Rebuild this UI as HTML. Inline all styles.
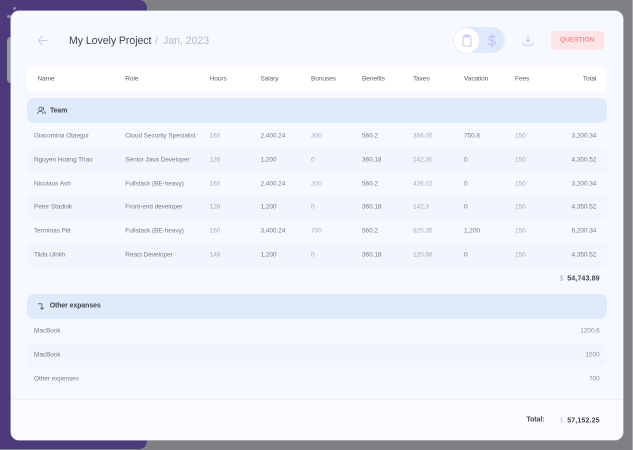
<!DOCTYPE html>
<html><head><meta charset="utf-8">
<style>
html,body{margin:0;padding:0;width:633px;height:450px;overflow:hidden;background:#7f8084;font-family:"Liberation Sans",sans-serif}
.a{position:absolute}
#purple{left:0;top:0;width:147px;height:449px;background:#4d3a7a;border-radius:0 8px 8px 0}
#line{left:632px;top:0;width:1px;height:450px;background:#a8a9ac}
#modal{left:11px;top:10.5px;width:611.5px;height:429px;background:#f6f9ff;border-radius:8px;overflow:hidden;box-shadow:0 0 0 .5px #d8d8e4}
#foot{left:11px;top:399px;width:611.5px;height:40.5px;background:#fbfcff;border-top:1px solid #eef0f6;border-radius:0 0 8px 8px;box-sizing:border-box}
.t{position:absolute;white-space:nowrap;font-size:6.5px;line-height:10px;color:#8b8d94;transform:translateY(-4.3px);letter-spacing:-.07px}
.h{color:#5d5f66}
.d{color:#7b7d84}
.l{color:#a8aab1}
.r{transform:translate(-100%,-4.3px)}
.b{font-weight:bold;color:#43454b;font-size:6.9px;letter-spacing:-.05px}
.n{font-size:7.1px;letter-spacing:.1px}
.bar{position:absolute;left:27px;width:580px;height:25px;background:#dfebfd;border-radius:7px}
.alt{position:absolute;left:27px;width:580px;height:23px;background:#f0f5fe;border-radius:5px}
</style></head><body>
<div class="a" id="purple"></div>
<div class="a" id="line"></div>
<div class="a" style="left:7px;top:37px;width:5px;height:46px;background:#9a9a9c;border-radius:4px 0 0 4px"></div>
<div class="a" style="left:7px;top:15px;width:4px;height:3px;background:#8f8a9c;border-radius:2px"></div>
<div class="a" style="left:13px;top:7px;width:3px;height:3px;background:#8f8a9c;border-radius:2px"></div>
<div class="a" id="modal"></div>
<div class="a" id="foot"></div>

<svg class="a" style="left:37px;top:34px" width="12" height="13" viewBox="0 0 12 13" fill="none" stroke="#cdc6fb" stroke-width="1" stroke-linecap="round" stroke-linejoin="round"><path d="M10.5 6.5H1.2M5.5 2.2L1.2 6.5L5.5 10.8"/></svg>
<div class="a" style="left:69px;top:33.6px;font-size:10.6px;line-height:15px;color:#45474d;white-space:nowrap;letter-spacing:-.07px">My Lovely Project</div>
<div class="a" style="left:155px;top:33.6px;font-size:10.6px;line-height:15px;color:#b9bbc2;white-space:nowrap">/</div>
<div class="a" style="left:163px;top:33.6px;font-size:10.6px;line-height:15px;color:#b9bbc2;white-space:nowrap;letter-spacing:-.05px">Jan, 2023</div>

<div class="a" style="left:454px;top:27px;width:51px;height:26px;background:#dfe9fd;border-radius:13px"></div>
<div class="a" style="left:454px;top:27.5px;width:25px;height:25px;background:#fff;border-radius:50%;box-shadow:0 0 0 1px #e6ebfb"></div>
<svg class="a" style="left:461px;top:34px" width="12" height="13" viewBox="0 0 12 13" fill="none" stroke="#cfc6fa" stroke-width="1"><rect x="2" y="2" width="8" height="10" rx="1"/><rect x="4" y="1" width="4" height="2" fill="#cfc6fa"/></svg>
<svg class="a" style="left:486px;top:34px" width="12" height="14" viewBox="0 0 12 14" fill="none" stroke="#bfb8f5" stroke-width="1" stroke-linecap="round"><path d="M6 .8V12.6M9 3.4C8.5 2.6 7.4 2.2 6 2.2 4.2 2.2 3 3 3 4.4 3 7.4 9.2 5.6 9.2 8.8 9.2 10.2 7.9 11 6 11 4.4 11 3.3 10.5 2.8 9.5"/></svg>
<svg class="a" style="left:522px;top:34px" width="12" height="13" viewBox="0 0 12 13" fill="none" stroke="#cfc6fa" stroke-width="1" stroke-linecap="round" stroke-linejoin="round"><path d="M6 1.5V8M3.5 5.7L6 8.2L8.5 5.7M1.2 8.5V10.2C1.2 10.8 1.6 11.2 2.2 11.2H9.8C10.4 11.2 10.8 10.8 10.8 10.2V8.5"/></svg>
<div class="a" style="left:551px;top:31px;width:52.5px;height:18.5px;background:#fde4e6;border-radius:4px"></div>
<div class="t" style="left:577.2px;top:40.2px;transform:translate(-50%,-4.3px);color:#f2656d;font-size:6.5px;letter-spacing:.05px">QUESTION</div>

<div class="a" style="left:27px;top:67px;width:580px;height:24.5px;background:#fff;border-radius:7px"></div>
<div class="bar" style="top:98px"></div>
<div class="alt" style="top:148.5px"></div>
<div class="alt" style="top:196px"></div>
<div class="alt" style="top:243.5px"></div>
<div class="bar" style="top:293.5px"></div>
<div class="alt" style="top:343.5px"></div>

<div class="t h" style="left:37.5px;top:79px">Name</div><div class="t h" style="left:125.3px;top:79px">Role</div><div class="t h" style="left:209.7px;top:79px">Hours</div><div class="t h" style="left:260.5px;top:79px">Salary</div><div class="t h" style="left:311px;top:79px">Bonuses</div><div class="t h" style="left:362px;top:79px">Benefits</div><div class="t h" style="left:413px;top:79px">Taxes</div><div class="t h" style="left:464px;top:79px">Vacation</div><div class="t h" style="left:515px;top:79px">Fees</div><div class="t h r" style="left:596.3px;top:79px">Total</div>

<svg class="a" style="left:36.5px;top:106px" width="9" height="9" viewBox="0 0 9 9" fill="none" stroke="#55575e" stroke-width=".8"><circle cx="3.4" cy="2.8" r="1.7"/><path d="M.6 8C.6 6.2 1.8 5.5 3.4 5.5S6.2 6.2 6.2 8M5.6 1.2C6.8 1.4 6.8 4 5.6 4.3M7 5.6C8 6 8.4 6.8 8.4 8"/></svg>
<div class="t b" style="left:50px;top:111.1px">Team</div>

<div class="t d" style="left:34px;top:135.7px">Giacomina Otaegui</div><div class="t d" style="left:125.3px;top:135.7px">Cloud Security Specialist</div><div class="t l" style="left:209.7px;top:135.7px">160</div><div class="t d" style="left:260.5px;top:135.7px">2,400.24</div><div class="t l" style="left:311px;top:135.7px">300</div><div class="t d" style="left:362px;top:135.7px">560.2</div><div class="t l" style="left:413px;top:135.7px">356.00</div><div class="t d" style="left:464px;top:135.7px">750.8</div><div class="t l" style="left:515px;top:135.7px">150</div><div class="t d r" style="left:596.3px;top:135.7px">3,200.34</div>

<div class="t d" style="left:34px;top:159.7px">Nguyen Hoang Thao</div><div class="t d" style="left:125.3px;top:159.7px">Senior Java Developer</div><div class="t l" style="left:209.7px;top:159.7px">126</div><div class="t d" style="left:260.5px;top:159.7px">1,200</div><div class="t l" style="left:311px;top:159.7px">0</div><div class="t d" style="left:362px;top:159.7px">360.18</div><div class="t l" style="left:413px;top:159.7px">142.30</div><div class="t d" style="left:464px;top:159.7px">0</div><div class="t l" style="left:515px;top:159.7px">150</div><div class="t d r" style="left:596.3px;top:159.7px">4,350.52</div>

<div class="t d" style="left:34px;top:183.5px">Nicolaus Ash</div><div class="t d" style="left:125.3px;top:183.5px">Fullstack (BE-heavy)</div><div class="t l" style="left:209.7px;top:183.5px">160</div><div class="t d" style="left:260.5px;top:183.5px">2,400.24</div><div class="t l" style="left:311px;top:183.5px">200</div><div class="t d" style="left:362px;top:183.5px">560.2</div><div class="t l" style="left:413px;top:183.5px">426.02</div><div class="t d" style="left:464px;top:183.5px">0</div><div class="t l" style="left:515px;top:183.5px">150</div><div class="t d r" style="left:596.3px;top:183.5px">3,200.34</div>

<div class="t d" style="left:34px;top:207.3px">Peter Stadnik</div><div class="t d" style="left:125.3px;top:207.3px">Front-end developer</div><div class="t l" style="left:209.7px;top:207.3px">126</div><div class="t d" style="left:260.5px;top:207.3px">1,200</div><div class="t l" style="left:311px;top:207.3px">0</div><div class="t d" style="left:362px;top:207.3px">360.18</div><div class="t l" style="left:413px;top:207.3px">142.3</div><div class="t d" style="left:464px;top:207.3px">0</div><div class="t l" style="left:515px;top:207.3px">150</div><div class="t d r" style="left:596.3px;top:207.3px">4,350.52</div>

<div class="t d" style="left:34px;top:231px">Terminas Pitt</div><div class="t d" style="left:125.3px;top:231px">Fullstack (BE-heavy)</div><div class="t l" style="left:209.7px;top:231px">160</div><div class="t d" style="left:260.5px;top:231px">3,400.24</div><div class="t l" style="left:311px;top:231px">700</div><div class="t d" style="left:362px;top:231px">560.2</div><div class="t l" style="left:413px;top:231px">620.35</div><div class="t d" style="left:464px;top:231px">1,200</div><div class="t l" style="left:515px;top:231px">150</div><div class="t d r" style="left:596.3px;top:231px">6,200.34</div>

<div class="t d" style="left:34px;top:254.8px">Tilda Ulrikh</div><div class="t d" style="left:125.3px;top:254.8px">React Developer</div><div class="t l" style="left:209.7px;top:254.8px">148</div><div class="t d" style="left:260.5px;top:254.8px">1,200</div><div class="t l" style="left:311px;top:254.8px">0</div><div class="t d" style="left:362px;top:254.8px">360.18</div><div class="t l" style="left:413px;top:254.8px">120.66</div><div class="t d" style="left:464px;top:254.8px">0</div><div class="t l" style="left:515px;top:254.8px">150</div><div class="t d r" style="left:596.3px;top:254.8px">4,350.52</div>

<div class="t" style="left:559.5px;top:277.5px;color:#b5b6bd;font-size:7.2px">$</div>
<div class="t b n r" style="left:599.7px;top:277.5px">54,743.89</div>

<svg class="a" style="left:37px;top:301.5px" width="9" height="9" viewBox="0 0 9 9" fill="none" stroke="#55575e" stroke-width=".8" stroke-linecap="round" stroke-linejoin="round"><path d="M1.3 1.8H4.4C4.8 1.8 5 2 5 2.4V7.2M3.5 5.8L5 7.3L6.5 5.8"/></svg>
<div class="t b" style="left:49.7px;top:306.1px">Other expanses</div>

<div class="t d" style="left:34px;top:331px">MacBook</div><div class="t l r" style="left:599.7px;top:331px;color:#8f9198">1200,6</div>
<div class="t d" style="left:34px;top:354.7px">MacBook</div><div class="t l r" style="left:599.7px;top:354.7px;color:#8f9198">1500</div>
<div class="t d" style="left:34px;top:378.5px">Other expenses</div><div class="t l r" style="left:599.7px;top:378.5px;color:#8f9198">700</div>

<div class="t b" style="left:526.5px;top:419.6px">Total:</div>
<div class="t" style="left:559.5px;top:419.6px;color:#cfc8f8;font-size:7.2px">$</div>
<div class="t b n r" style="left:599.7px;top:419.6px">57,152.25</div>
</body></html>
